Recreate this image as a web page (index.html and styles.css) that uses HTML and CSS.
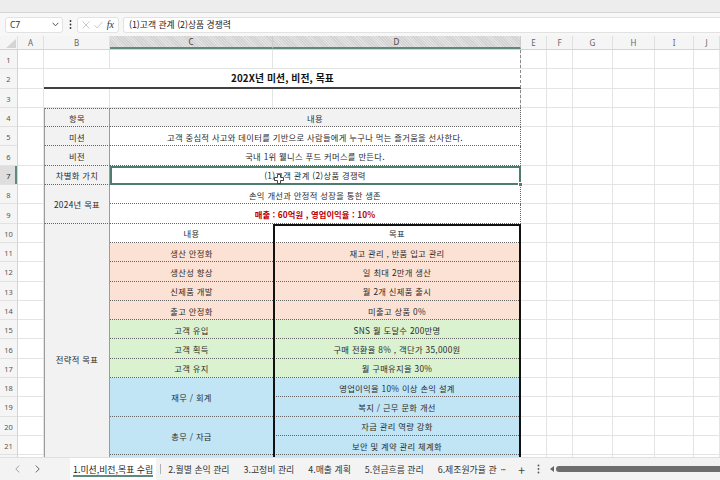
FILE: index.html
```html
<!DOCTYPE html>
<html lang="ko">
<head>
<meta charset="utf-8">
<title>202X년 미션, 비전, 목표</title>
<link rel="stylesheet" href="styles.css">
</head>
<body>
<div class="topstrip"></div>
<div class="fbar">
  <div class="namebox"><span>C7</span><svg class="chev" width="7" height="5" viewBox="0 0 7 5"><path d="M0.6 0.8 L3.5 3.8 L6.4 0.8" fill="none" stroke="#555" stroke-width="1"/></svg></div>
  <div class="fdots"><svg width="3" height="11" viewBox="0 0 3 11"><circle cx="1.5" cy="2" r="0.9" fill="#333"/><circle cx="1.5" cy="5.5" r="0.9" fill="#333"/><circle cx="1.5" cy="9" r="0.9" fill="#333"/></svg></div>
  <div class="fbtns">
    <svg width="8" height="8" viewBox="0 0 8 8"><path d="M0.5 0.5 L7.5 7.5 M7.5 0.5 L0.5 7.5" stroke="#c4c4c4" stroke-width="0.9" fill="none"/></svg>
    <svg width="9" height="8" viewBox="0 0 9 8"><path d="M0.5 4.3 L3.2 7 L8.5 0.8" stroke="#c4c4c4" stroke-width="0.9" fill="none"/></svg>
    <span class="fx">fx</span>
  </div>
  <div class="finput">(1)고객 관계 (2)상품 경쟁력</div>
</div>
<div class="colhead">
  <div class="corner"><svg width="10" height="9" viewBox="0 0 10 9"><path d="M10 0 L10 9 L0 9 Z" fill="#d4d4d4"/></svg></div>
  <div class="ch">A</div>
  <div class="ch">B</div>
  <div class="ch sel">C</div>
  <div class="ch sel">D</div>
  <div class="ch">E</div>
  <div class="ch">F</div>
  <div class="ch">G</div>
  <div class="ch">H</div>
  <div class="ch">I</div>
  <div class="ch">J</div>
</div>
<div class="sheetwrap">
  <div class="rowhead">
    <div class="rn">1</div><div class="rn">2</div><div class="rn">3</div><div class="rn">4</div>
    <div class="rn">5</div><div class="rn">6</div><div class="rn sel">7</div><div class="rn">8</div>
    <div class="rn">9</div><div class="rn">10</div><div class="rn">11</div><div class="rn">12</div>
    <div class="rn">13</div><div class="rn">14</div><div class="rn">15</div><div class="rn">16</div>
    <div class="rn">17</div><div class="rn">18</div><div class="rn">19</div><div class="rn">20</div>
    <div class="rn">21</div>
  </div>
  <div class="grid">
    <div class="vl cA"></div><div class="vl cB"></div><div class="vl cC"></div><div class="vl cD"></div><div class="vl cE"></div>
    <div class="vl cF"></div><div class="vl cG"></div><div class="vl cH"></div><div class="vl cI"></div><div class="vl cJ"></div>

    <div class="cell title cBD r2">202X년 미션, 비전, 목표</div>

    <div class="cell lbl top cB r4">항목</div>
    <div class="cell hdr wide top cCD r4">내용</div>

    <div class="cell lbl cB r5">미션</div>
    <div class="cell wide cCD r5">고객 중심적 사고와 데이터를 기반으로 사람들에게 누구나 먹는 즐거움을 선사한다.</div>

    <div class="cell lbl cB r6">비전</div>
    <div class="cell wide cCD r6">국내 1위 웰니스 푸드 커머스를 만든다.</div>

    <div class="cell lbl cB r7">차별화 가치</div>
    <div class="cell wide cCD r7">(1)고객 관계 (2)상품 경쟁력</div>

    <div class="cell lbl cB r8 s2">2024년 목표</div>
    <div class="cell wide cCD r8">손익 개선과 안정적 성장을 통한 생존</div>
    <div class="cell wide red cCD r9">매출 : 60억원 , 영업이익율 : 10%</div>

    <div class="cell lbl cB r10 s14">전략적 목표</div>
    <div class="cell cC r10">내용</div>
    <div class="cell cD r10">목표</div>

    <div class="cell sal cC r11">생산 안정화</div>
    <div class="cell sal cD r11">재고 관리 , 반품 입고 관리</div>
    <div class="cell sal cC r12">생산성 향상</div>
    <div class="cell sal cD r12">일 최대 2만개 생산</div>
    <div class="cell sal cC r13">신제품 개발</div>
    <div class="cell sal cD r13">월 2개 신제품 출시</div>
    <div class="cell sal cC r14">출고 안정화</div>
    <div class="cell sal cD r14">미출고 상품 0%</div>

    <div class="cell grn cC r15">고객 유입</div>
    <div class="cell grn cD r15">SNS 월 도달수 200만명</div>
    <div class="cell grn cC r16">고객 획득</div>
    <div class="cell grn cD r16">구매 전환율 8% , 객단가 35,000원</div>
    <div class="cell grn cC r17">고객 유지</div>
    <div class="cell grn cD r17">월 구매유지율 30%</div>

    <div class="cell blu cC r18 s2">재무 / 회계</div>
    <div class="cell blu cD r18">영업이익율 10% 이상 손익 설계</div>
    <div class="cell blu cD r19">복지 / 근무 문화 개선</div>
    <div class="cell blu cC r20 s2">총무 / 자금</div>
    <div class="cell blu cD r20">자금 관리 역량 강화</div>
    <div class="cell blu cD r21">보안 및 계약 관리 체계화</div>
    <div class="cell blu cC r22 s2"></div>
    <div class="cell blu cD r22"></div>
    <div class="cell blu cD r23"></div>

    <div class="pb cD r1 s3"></div>
    <div class="dbox cD r10 s14"></div>
    <div class="selbox cCD r7">
      <svg class="cursor" width="10" height="10" viewBox="0 0 10 10"><path d="M3.5 0.5 H6.5 V3.5 H9.5 V6.5 H6.5 V9.5 H3.5 V6.5 H0.5 V3.5 H3.5 Z" fill="#fff" stroke="#333" stroke-width="0.9"/></svg>
      <div class="handle"></div>
    </div>
  </div>
</div>
<div class="tabbar">
  <div class="nav">
    <svg width="5" height="8" viewBox="0 0 5 8"><path d="M4.2 0.6 L0.8 4 L4.2 7.4" fill="none" stroke="#999" stroke-width="0.9"/></svg>
    <svg width="5" height="8" viewBox="0 0 5 8"><path d="M0.8 0.6 L4.2 4 L0.8 7.4" fill="none" stroke="#555" stroke-width="0.9"/></svg>
  </div>
  <div class="tab active">1.미션,비전,목표 수립</div>
  <div class="sep"></div>
  <div class="tabs">
    <div class="tab">2.월별 손익 관리</div>
    <div class="tab">3.고정비 관리</div>
    <div class="tab">4.매출 계획</div>
    <div class="tab">5.현금흐름 관리</div>
    <div class="tab">6.제조원가율 관</div>
  </div>
  <div class="more">···</div>
  <div class="plus">+</div>
  <div class="vdots"><svg width="3" height="10" viewBox="0 0 3 10"><circle cx="1.5" cy="1.5" r="0.9" fill="#555"/><circle cx="1.5" cy="5" r="0.9" fill="#555"/><circle cx="1.5" cy="8.5" r="0.9" fill="#555"/></svg></div>
  <div class="hscroll">
    <svg width="4" height="6" viewBox="0 0 4 6"><path d="M4 0 L0 3 L4 6 Z" fill="#666"/></svg>
    <div class="thumb"></div>
  </div>
</div>
</body>
</html>
```
FILE: styles.css
```css
* { box-sizing: border-box; }
html, body { margin: 0; padding: 0; }
body {
  width: 720px;
  height: 480px;
  overflow: hidden;
  background: #fff;
  font-family: "Noto Sans CJK KR", "Noto Sans", sans-serif;
  color: #222;
}

.topstrip { height: 13px; background: #ededed; border-bottom: 1px solid #d6d6d6; }

.fbar {
  height: 23px;
  display: flex;
  align-items: center;
  background: #f7f7f7;
  padding-left: 5px;
}
.namebox {
  width: 58px; height: 16px;
  background: #fff;
  border: 1px solid #e2e2e2;
  border-radius: 3px;
  display: flex; align-items: center; justify-content: space-between;
  padding: 0 3px 0 4px;
  font-size: 8.5px; color: #333;
  font-family: "Noto Sans", sans-serif;
}
.fdots { width: 14px; display: flex; justify-content: center; align-items: center; }
.fbtns {
  width: 42px; height: 16px;
  background: #fff;
  border: 1px solid #e2e2e2;
  border-radius: 3px;
  display: flex; align-items: center; justify-content: space-around;
  padding: 0 2px;
}
.fx { font-family: "Liberation Serif", serif; font-style: italic; font-size: 10px; color: #333; line-height: 1; }
.finput {
  flex: 1; height: 16px;
  margin-left: 4px;
  background: #fff;
  border: 1px solid #e2e2e2; border-right: none;
  border-radius: 3px 0 0 3px;
  display: flex; align-items: center;
  padding-left: 5px;
  font-size: 8.8px; color: #222;
}

.colhead {
  display: grid;
  grid-template-columns: 18px 26px 66px 163px 248px 26px 26px 40px 42px 39px 1fr;
  height: 14px;
  background: #f5f5f5;
  border-bottom: 1px solid #d4d4d4;
}
.corner { border-right: 1px solid #dedede; display: flex; align-items: flex-end; justify-content: flex-end; padding: 0 1px 1px 0; }
.ch {
  display: flex; align-items: center; justify-content: center;
  font-size: 8px; color: #666;
  border-right: 1px solid #e0e0e0;
  font-family: "Noto Sans", sans-serif;
}
.ch.sel {
  background: repeating-linear-gradient(45deg, #d2d2d2 0 1px, #e2e2e2 1px 2px);
  color: #444;
  border-bottom: 2px solid #5f8a7b;
  border-right-color: #cccccc;
}

.sheetwrap { display: flex; height: 407px; overflow: hidden; }
.rowhead {
  width: 18px; flex-shrink: 0;
  background: #f5f5f5;
  border-right: 1px solid #d4d4d4;
  display: flex; flex-direction: column;
}
.rn {
  height: 19.3px; flex-shrink: 0;
  border-bottom: 1px solid #e2e2e2;
  display: flex; align-items: center; justify-content: center;
  font-size: 7.5px; color: #555;
  font-family: "Noto Sans", sans-serif;
  padding-top: 2px;
}
.rn.sel { background: #dedede; color: #222; box-shadow: inset -2px 0 #5f8a7b; }

.grid {
  flex: 1;
  display: grid;
  grid-template-columns: 26px 66px 163px 248px 26px 26px 40px 42px 39px 1fr;
  grid-template-rows: repeat(23, 19.3px);
  background: repeating-linear-gradient(to bottom, transparent 0, transparent 18.3px, #e4e4e4 18.3px, #e4e4e4 19.3px);
}
.vl { grid-row: 1 / -1; border-right: 1px solid #e4e4e4; }

.cA { grid-column: 1; } .cB { grid-column: 2; } .cC { grid-column: 3; } .cD { grid-column: 4; }
.cE { grid-column: 5; } .cF { grid-column: 6; } .cG { grid-column: 7; } .cH { grid-column: 8; }
.cI { grid-column: 9; } .cJ { grid-column: 10; }
.cCD { grid-column: 3 / 5; } .cBD { grid-column: 2 / 5; }

.r1 { grid-row-start: 1; } .r2 { grid-row-start: 2; } .r4 { grid-row-start: 4; } .r5 { grid-row-start: 5; }
.r6 { grid-row-start: 6; } .r7 { grid-row-start: 7; } .r8 { grid-row-start: 8; } .r9 { grid-row-start: 9; }
.r10 { grid-row-start: 10; } .r11 { grid-row-start: 11; } .r12 { grid-row-start: 12; } .r13 { grid-row-start: 13; }
.r14 { grid-row-start: 14; } .r15 { grid-row-start: 15; } .r16 { grid-row-start: 16; } .r17 { grid-row-start: 17; }
.r18 { grid-row-start: 18; } .r19 { grid-row-start: 19; } .r20 { grid-row-start: 20; } .r21 { grid-row-start: 21; }
.r22 { grid-row-start: 22; } .r23 { grid-row-start: 23; }
.s2 { grid-row-end: span 2; } .s3 { grid-row-end: span 3; } .s14 { grid-row-end: span 14; }

.cell {
  display: flex; align-items: center; justify-content: center;
  font-size: 8.3px; color: #2a2a2a;
  background: #fff;
  border-bottom: 1px dotted #666;
  white-space: nowrap;
  letter-spacing: 0.3px;
  padding-top: 1px;
}
.title { font-weight: 700; font-size: 9.8px; color: #111; border-bottom: 2px solid #404040; letter-spacing: 0.1px; }
.top { border-top: 1px dotted #666; }
.lbl { background: #f2f2f2; border-left: 1px solid #9c9c9c; border-right: 1px solid #9c9c9c; }
.wide { border-right: 1px dotted #666; }
.hdr { background: #f2f2f2; }
.red { color: #c00000; font-weight: 700; letter-spacing: 0.1px; }
.sal { background: #fbe2d5; }
.grn { background: #daf2d0; }
.blu { background: #c1e5f5; }

.pb { border-right: 1px dashed #8a8a8a; }
.dbox { border: 2px solid #111; border-bottom: none; }
.selbox { border: 2px solid #4f7d6b; position: relative; }
.cursor { position: absolute; left: 162px; top: 6px; }
.handle { position: absolute; right: -4px; bottom: -4px; width: 5px; height: 5px; background: #4f7d6b; border: 1px solid #fff; }

.tabbar {
  height: 23px;
  display: flex; align-items: stretch;
  background: #f3f3f3;
  border-top: 1px solid #e0e0e0;
  font-size: 8.9px; color: #333;
}
.nav { width: 70px; display: flex; align-items: center; padding-left: 15px; gap: 15px; }
.tab { display: flex; align-items: center; white-space: nowrap; }
.tab.active { background: #fff; padding: 0 3px; position: relative; color: #222; }
.tab.active::after { content: ""; position: absolute; left: 3px; right: 3px; bottom: 3px; height: 2px; background: #5f8a7b; }
.sep { width: 1px; background: #b0b0b0; margin: 6px 7px 6px 4px; }
.tabs { display: flex; gap: 14px; }
.more { display: flex; align-items: center; margin-left: 4px; color: #444; font-size: 9px; letter-spacing: -1px; }
.plus { display: flex; align-items: center; margin-left: 13px; font-size: 12px; color: #444; }
.vdots { display: flex; align-items: center; margin-left: 12px; }
.hscroll { flex: 1; display: flex; align-items: center; margin-left: 10px; }
.thumb { flex: 1; height: 6px; background: #6e6e6e; border-radius: 3px 0 0 3px; margin-left: 2px; }
```
